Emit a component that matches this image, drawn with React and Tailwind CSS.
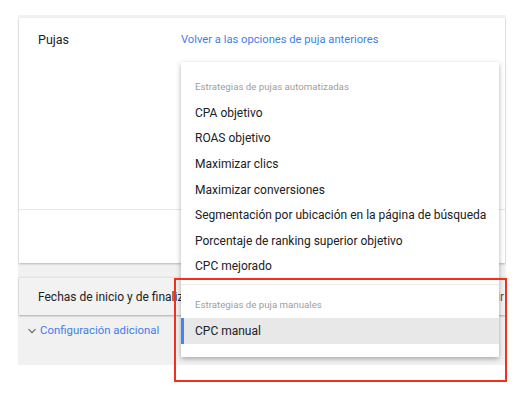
import React from "react";

const autoItems = [
  "CPA objetivo",
  "ROAS objetivo",
  "Maximizar clics",
  "Maximizar conversiones",
  "Segmentación por ubicación en la página de búsqueda",
  "Porcentaje de ranking superior objetivo",
  "CPC mejorado",
];

export default function App() {
  return (
    <div
      className="relative w-[515px] h-[403px] bg-white overflow-hidden"
      style={{ fontFamily: "Roboto, 'Liberation Sans', sans-serif" }}
    >
      <div className="ml-[18px] mt-[15px] w-[488px] h-[350px] bg-[#f1f1f1] pt-[3px] pl-[1px] pr-[1px]">
        {/* Pujas card */}
        <div className="bg-white h-[245px] shadow-[0_1px_2px_rgba(0,0,0,0.25)] flex flex-col">
          <div className="flex h-[191px] pt-[13px]">
            <div className="w-[162px] pl-[19px] text-[12.5px] text-[#202124] leading-[18px]">Pujas</div>
            <div className="text-[11.2px] text-[#3f7fe8] leading-[18px]">
              Volver a las opciones de puja anteriores
            </div>
          </div>
          <div className="h-px bg-[#e6e6e6]" />
        </div>

        {/* Fechas card */}
        <div className="mt-[14px] h-[38px] bg-[#f2f2f2] shadow-[0_1px_2px_rgba(0,0,0,0.3)] border-t border-[#e2e2e2] flex items-center justify-between pr-[1px]">
          <span className="pl-[19px] text-[12px] text-[#202124] whitespace-nowrap">
            Fechas de inicio y de finalización
          </span>
          <span className="text-[12px] text-[#555] whitespace-nowrap">ir</span>
        </div>

        {/* Configuración adicional */}
        <div className="mt-[7px] flex items-center pl-[8px] h-[18px]">
          <svg width="10" height="10" viewBox="0 0 10 10" className="mr-[3px]">
            <path d="M1.5 3.2 L5 6.7 L8.5 3.2" fill="none" stroke="#666" strokeWidth="1.2" />
          </svg>
          <span className="text-[11.4px] text-[#3f7fe8]">Configuración adicional</span>
        </div>
      </div>

      {/* Dropdown menu overlay */}
      <div className="absolute left-[181px] top-[62px] w-[318px] bg-white shadow-[0_2px_5px_rgba(0,0,0,0.3)] pt-[12px] pb-[13px]">
        <div className="h-[26px] flex items-center pl-[14px] text-[9.7px] text-[#9e9e9e]">
          Estrategias de pujas automatizadas
        </div>
        {autoItems.map((t) => (
          <div key={t} className="h-[25.6px] flex items-center pl-[14px] text-[12px] text-[#202124] whitespace-nowrap">
            {t}
          </div>
        ))}
        <div className="mt-[5px] h-px bg-[#ececec]" />
        <div className="mt-[7px] h-[26px] flex items-center pl-[14px] text-[9.7px] text-[#9e9e9e]">
          Estrategias de puja manuales
        </div>
        <div className="h-[25.6px] flex items-center bg-[#e8e8e8] border-l-[3px] border-[#4285f4] pl-[11px] text-[12px] text-[#202124]">
          CPC manual
        </div>
      </div>

      {/* Red annotation box */}
      <div className="absolute left-[174px] top-[278px] w-[333px] h-[104px] border-2 border-[#f2311d]" />
    </div>
  );
}
